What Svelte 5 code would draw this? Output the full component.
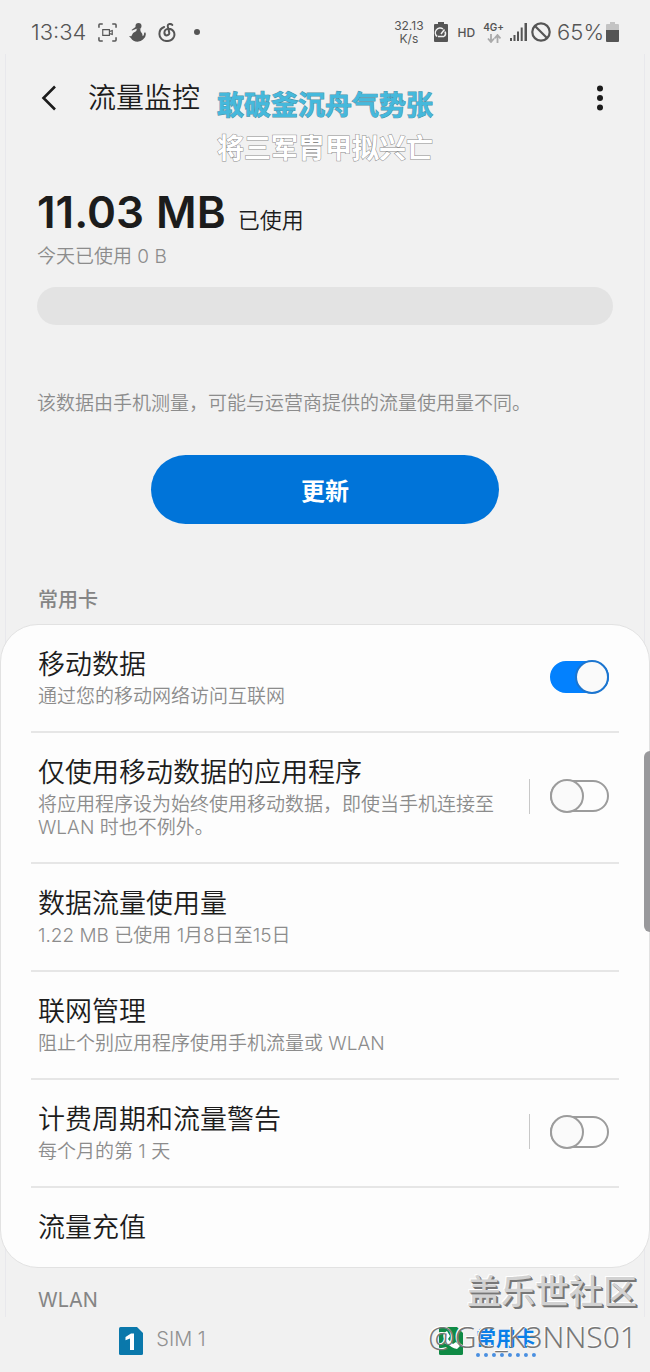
<script>
	/**
	 * @typedef {Object} Setting
	 * @property {string} id
	 * @property {string} title
	 * @property {string} [note] - Secondary line under the title
	 * @property {boolean} [on] - Present when the row has a switch
	 * @property {boolean} [split] - Draws a rule in front of the switch
	 */

	/** @type {Setting[]} */
	let settings = $state([
		{ id: 'mobile-data', title: '移动数据', note: '通过您的移动网络访问互联网', on: true },
		{
			id: 'data-only-apps',
			title: '仅使用移动数据的应用程序',
			note: '将应用程序设为始终使用移动数据，即使当手机连接至 WLAN 时也不例外。',
			on: false,
			split: true,
		},
		{ id: 'usage', title: '数据流量使用量', note: '1.22 MB 已使用 1月8日至15日' },
		{ id: 'network', title: '联网管理', note: '阻止个别应用程序使用手机流量或 WLAN' },
		{ id: 'billing', title: '计费周期和流量警告', note: '每个月的第 1 天', on: false, split: true },
		{ id: 'top-up', title: '流量充值' },
	]);

	let sim = $state('main');
</script>

<div class="screen">
	<header class="status">
		<div class="status-group">
			<time class="clock">13:34</time>
			<svg width="19" height="19" viewBox="0 0 20 20" fill="none" stroke="currentColor" stroke-width="1.6">
				<path d="M1 5V2q0-1 1-1h3M15 1h3q1 0 1 1v3M1 15v3q0 1 1 1h3M15 19h3q1 0 1-1v-3" />
				<path d="M5 7h7v6H5zM12 9l3-1v4l-3-1" stroke-width="1.2" />
			</svg>
			<svg width="17" height="19" viewBox="0 0 17 19" fill="currentColor">
				<circle cx="9.500" cy="3" r="3" />
				<path d="M7.500 3.200 2.500 7l.6.6 5-2.100z" />
				<path d="M7.500 5.500h4q-.5 2 .5 3.500 1.800 2 1.600 4.300Q15.500 12 15 9.800l1.500-.3q1.200 4.500-2.500 7-2 2-5.500 2.300Q4 18.500 2 15.300L0 13l2.300.2Q3.500 9.500 7 8.300 8 7 7.500 5.500z" />
			</svg>
			<svg width="18" height="19" viewBox="0 0 18 20" fill="none" stroke="currentColor" stroke-width="2.100" stroke-linecap="round">
				<path d="M14.500 2C13 .2 9.500.8 9.800 3.300L11.300 10c.8 3.500-4.500 4.200-5 .8C6 8 8 5.800 11 6c5 .4 6.500 5 5.500 8-1.300 3.300-4 5-7.500 5-5 0-8-3.500-8-7.500C1 8 3 5.200 6 4.200" />
			</svg>
			<span class="more-dot"></span>
		</div>
		<div class="status-group right">
			<div class="speed"><span>32.13</span><span>K/s</span></div>
			<svg width="14" height="20" viewBox="0 0 14 20">
				<path d="M4 0h6v2h3q1 0 1 1v16q0 1-1 1H1q-1 0-1-1V3q0-1 1-1h3z" fill="#555" />
				<path d="M3.200 14.500A4.300 4.300 0 0 1 9 7M11 9.500a4.300 4.300 0 0 1-.8 5M4 14.500h6M7 12l3.500-4.500" fill="none" stroke="#f1f1f1" stroke-width="1.500" />
			</svg>
			<span class="hd">HD</span>
			<div class="network">
				<span>4G+</span>
				<svg width="14" height="9" viewBox="0 0 14 9" fill="none" stroke="#aaa" stroke-width="1.800">
					<path d="M4 0v8M1 4.500l3 3.500 3-3.500M10.500 9V1M7.500 4.500l3-3.500 3 3.500" />
				</svg>
			</div>
			<svg width="17" height="18" viewBox="0 0 17 18" fill="#555">
				<path d="M0 15h2v3H0zM3.500 12h2v6h-2zM7 8.500h2V18H7zM10.700 4.500h2V18h-2zM14.500 0h2.500v18h-2.500z" />
			</svg>
			<svg class="blocked" width="20" height="20" viewBox="0 0 20 20" fill="none" stroke="#555" stroke-width="2.200">
				<circle cx="10" cy="10" r="8.700" />
				<path d="m4 4 12 12" />
			</svg>
			<span class="percent">65%</span>
			<svg width="13" height="20" viewBox="0 0 13 20">
				<path d="M4 0h5v2h3q1 0 1 1v6H0V3q0-1 1-1h3z" fill="#c3c3c3" />
				<path d="M0 8h13v11q0 1-1 1H1q-1 0-1-1z" fill="#555" />
			</svg>
		</div>
	</header>

	<main class="panel">
		<div class="toolbar">
			<button class="icon-button" aria-label="返回">
				<svg width="16" height="26" viewBox="0 0 16 26" fill="none" stroke="currentColor" stroke-width="2.600">
					<path d="M14 1.500 2.500 13 14 24.500" />
				</svg>
			</button>
			<h1>流量监控</h1>
			<button class="icon-button menu" aria-label="更多选项">
				<svg width="8" height="26" viewBox="0 0 8 26" fill="currentColor">
					<circle cx="4" cy="3.500" r="3" />
					<circle cx="4" cy="13" r="3" />
					<circle cx="4" cy="22.500" r="3" />
				</svg>
			</button>
			<!-- Floating lyrics from the music player -->
			<div class="lyrics">
				<p class="current">敢破釜沉舟气势张</p>
				<p>将三军胄甲拟兴亡</p>
			</div>
		</div>

		<section class="summary">
			<p class="total"><strong>11.03</strong><strong>MB</strong><span>已使用</span></p>
			<p class="note">今天已使用 0 B</p>
			<div class="meter"></div>
			<p class="note">该数据由手机测量，可能与运营商提供的流量使用量不同。</p>
			<button class="refresh">更新</button>
		</section>

		<h2>常用卡</h2>
		<ul class="card">
			{#each settings as item (item.id)}
				<li class="row">
					<label class="text" for={item.on === undefined ? undefined : item.id}>
						<span class="title">{item.title}</span>
						{#if item.note}
							<span class="note">{item.note}</span>
						{/if}
					</label>
					{#if item.on !== undefined}
						<div class="control" class:split={item.split}>
							<input class="switch" id={item.id} type="checkbox" bind:checked={item.on} />
						</div>
					{/if}
				</li>
			{/each}
		</ul>
		<h2 class="wlan">WLAN</h2>
	</main>

	<nav class="tabs">
		<button class="tab" class:selected={sim === 'sim1'} onclick={() => (sim = 'sim1')}>
			<svg width="24" height="28" viewBox="0 0 24 28">
				<path d="M1.500 0H18l6 6v20.500q0 1.500-1.500 1.500h-21Q0 28 0 26.500v-25Q0 0 1.500 0z" fill="#0a78ab" />
				<path d="M6.500 10 12 6.500h3V23h-4V11.500l-4.500 1.700z" fill="#fff" />
			</svg>
			<span>SIM 1</span>
		</button>
		<button class="tab" class:selected={sim === 'main'} onclick={() => (sim = 'main')}>
			<svg width="24" height="28" viewBox="0 0 24 28">
				<path d="M1.500 0H18l6 6v20.500q0 1.500-1.500 1.500h-21Q0 28 0 26.500v-25Q0 0 1.500 0z" fill="#0f8a45" />
				<path d="M5 6q-2 4 2 9 5 6 11 7l3-3-4-4-3 2q-3-2-5-5l2-3-3-5z" fill="#fff" />
			</svg>
			<span>常用卡</span>
		</button>
	</nav>

	<div class="scrollbar"></div>
	<div class="watermark">
		<p class="site">盖乐世社区</p>
		<p>@GC_K3NNS01</p>
	</div>
</div>

<style>
	:global(body) {
		margin: 0;
		background: #f1f1f1;
	}

	.screen {
		position: relative;
		overflow: hidden;
		background: #f1f1f1;
		color: #1c1c1c;
		font-family: Inter, 'Noto Sans CJK SC', sans-serif;
		font-weight: 350;
	}

	p,
	h1,
	h2,
	ul {
		margin: 0;
		padding: 0;
	}

	button {
		padding: 0;
		border: 0;
		background: none;
		color: inherit;
		font: inherit;
	}

	svg {
		flex: none;
		display: block;
	}

	.status {
		display: flex;
		justify-content: space-between;
		box-sizing: border-box;
		height: 54px;
		padding: 10px 31px 0;
		color: #555;
	}

	.status-group {
		display: flex;
		align-items: center;
		gap: 12px;

		&.right {
			gap: 2px;
		}
	}

	.clock,
	.percent {
		font-size: 22px;
	}

	.more-dot {
		width: 6px;
		height: 6px;
		margin-left: 6px;
		border-radius: 50%;
		background: #555;
	}

	.speed,
	.network {
		display: flex;
		flex-direction: column;
		align-items: center;
		font-size: 12px;
		font-weight: 400;
		line-height: 13px;
	}

	.speed {
		margin-right: 8px;
	}

	.hd {
		margin: 0 6px 0 8px;
		font-size: 12px;
		font-weight: 500;
	}

	.network {
		margin-right: 4px;
		font-size: 10px;
		font-weight: 600;
	}

	.blocked {
		margin: 0 4px 0 2px;
	}

	.panel {
		margin: 0 5px;
		padding-bottom: 5px;
		border: solid #e8e8ec;
		border-width: 0 1px;
	}

	.toolbar {
		position: relative;
		display: flex;
		align-items: center;
		height: 88px;
		padding: 0 40px 0 35px;
	}

	.icon-button {
		color: #1c1c1c;
	}

	.menu {
		margin-left: auto;
	}

	h1 {
		margin-left: 31px;
		font-size: 28px;
		font-weight: 350;
		line-height: 40px;
	}

	.lyrics {
		position: absolute;
		top: 30px;
		left: 211px;
		color: #fff;
		font-size: 27px;
		font-weight: 700;
		line-height: 43px;
		paint-order: stroke fill;
		-webkit-text-stroke: 1px #8c8c8c;

		.current {
			color: #45b9dc;
			-webkit-text-stroke-color: #4f91a8;
		}
	}

	.summary {
		display: flex;
		flex-direction: column;
		padding: 42px 31px 0;
	}

	.total {
		display: flex;
		align-items: baseline;
		gap: 12px;
		margin-bottom: 5px;
		font-size: 22px;
		line-height: 24px;

		strong {
			font-size: 44px;
			font-weight: 600;
			line-height: 56px;
		}
	}

	.note {
		color: #8c8c8c;
		font-size: 19px;
		line-height: 23px;
	}

	.meter {
		height: 38px;
		margin: 19px 0 67px;
		border-radius: 19px;
		background: #e3e3e3;
	}

	.refresh {
		align-self: center;
		width: 348px;
		height: 69px;
		margin: 40px 0 64px;
		border-radius: 35px;
		background: #0074d9;
		color: #fff;
		font-size: 24px;
		font-weight: 700;
	}

	h2 {
		padding: 0 32px;
		color: #858585;
		font-size: 20px;
		font-weight: 500;
		line-height: 24px;
	}

	.wlan {
		font-weight: 400;
	}

	.card {
		margin: 12px -6px 20px;
		padding: 0 30px;
		border: 1px solid #e2e2e2;
		border-radius: 38px;
		background: #fdfdfd;
		list-style: none;
	}

	.row {
		display: flex;
		align-items: center;
		padding: 24px 10px 23px 7px;
		border-bottom: 2px solid #e6e6e6;

		&:last-child {
			border-bottom: 0;
		}
	}

	.text {
		display: flex;
		flex: 1;
		flex-direction: column;
		gap: 4px;
	}

	.title {
		font-size: 27px;
		line-height: 32px;
	}

	.control {
		display: flex;
		align-items: center;
		height: 35px;
		margin-bottom: 4px;
		padding-left: 20px;

		&.split {
			margin-left: 20px;
			border-left: 1px solid #c8c8c8;
		}
	}

	.switch {
		position: relative;
		appearance: none;
		box-sizing: border-box;
		width: 59px;
		height: 32px;
		margin: 0;
		border: 2px solid #9c9c9c;
		border-radius: 16px;

		&::before {
			content: '';
			position: absolute;
			top: -3px;
			left: -2px;
			box-sizing: border-box;
			width: 34px;
			height: 34px;
			border: 2px solid #9c9c9c;
			border-radius: 50%;
			background: #fafafa;
		}

		&:checked {
			border-color: #0381fe;
			background: #0381fe;
		}

		&:checked::before {
			right: -2px;
			left: auto;
			border-color: #1c75cf;
		}
	}

	.tabs {
		display: grid;
		grid-template-columns: 1fr 1fr;
		height: 55px;
	}

	.tab {
		display: flex;
		justify-content: center;
		align-items: center;
		gap: 13px;
		padding-bottom: 7px;
		color: #909090;
		font-size: 20px;
		line-height: 28px;

		span {
			border-bottom: 4px dotted transparent;
		}

		&.selected {
			color: #0a7fe8;
			font-weight: 700;

			span {
				border-color: #4a8fe0;
			}
		}
	}

	.scrollbar {
		position: absolute;
		top: 751px;
		right: 0;
		width: 6px;
		height: 181px;
		border-radius: 6px 0 0 6px;
		background: #99999c;
	}

	.watermark {
		position: absolute;
		right: 13px;
		bottom: 12px;
		color: #777;
		font-family: 'Noto Sans', 'Noto Sans CJK SC', sans-serif;
		font-size: 30px;
		font-weight: 300;
		line-height: 46px;
		text-align: right;
		text-shadow: -1px -1px #fff;
		pointer-events: none;

		.site {
			color: #d2d2d2;
			font-size: 34px;
			font-weight: 500;
			text-shadow: 1px 1px #777, 2px 2px #777, -1px -1px #fff;
		}
	}
</style>
